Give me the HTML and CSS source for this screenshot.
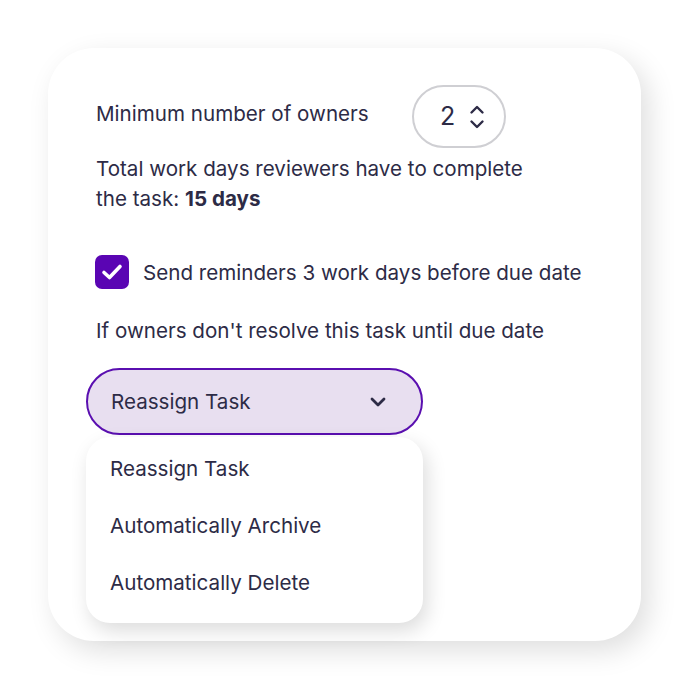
FILE: index.html
```html
<!DOCTYPE html>
<html>
<head>
<meta charset="utf-8">
<link rel="stylesheet" href="styles.css">
</head>
<body>
<div class="card">
  <div class="row-owners">
    <span class="label">Minimum number of owners</span>
    <div class="stepper">
      <span class="num">2</span>
      <svg class="updown" width="16" height="26" viewBox="0 0 16 26" fill="none" stroke="#2d2b46" stroke-width="2.4" stroke-linecap="round" stroke-linejoin="round"><path d="M2.5 8.5 L8 3 L13.5 8.5"/><path d="M2.5 17.5 L8 23 L13.5 17.5"/></svg>
    </div>
  </div>
  <p class="total">Total work days reviewers have to complete<br>the task: <b>15 days</b></p>
  <div class="check-row">
    <span class="checkbox"><svg width="22" height="18" viewBox="0 0 22 18" fill="none" stroke="#fff" stroke-width="3.6" stroke-linecap="round" stroke-linejoin="round"><path d="M3 9.5 L8.5 14.5 L19 3.5"/></svg></span>
    <span class="label">Send reminders 3 work days before due date</span>
  </div>
  <p class="if">If owners don't resolve this task until due date</p>
  <div class="select-wrap">
    <div class="select">
      <span>Reassign Task</span>
      <svg width="18" height="12" viewBox="0 0 18 12" fill="none" stroke="#2d2b46" stroke-width="2.8" stroke-linecap="round" stroke-linejoin="round"><path d="M3 3 L9 9 L15 3"/></svg>
    </div>
    <ul class="menu">
      <li>Reassign Task</li>
      <li>Automatically Archive</li>
      <li>Automatically Delete</li>
    </ul>
  </div>
</div>
</body>
</html>
```

FILE: styles.css
```css
html, body {
  margin: 0;
  padding: 0;
  background: #ffffff;
}
body {
  width: 690px;
  height: 690px;
  font-family: "Inter", "Liberation Sans", sans-serif;
  color: #2d2b46;
  font-size: 20.6px;
  line-height: 23px;
  padding: 48px;
  box-sizing: border-box;
}
.card {
  width: 593px;
  height: 593px;
  box-sizing: border-box;
  background: #fff;
  border-radius: 46px;
  box-shadow: 8px 10px 28px rgba(0, 0, 0, 0.13);
  padding: 37px 0 0 48px;
}
.row-owners {
  display: flex;
  align-items: center;
  height: 63px;
}
.row-owners .label {
  width: 316px;
  margin-top: -6px;
}
.stepper {
  width: 94px;
  height: 63px;
  box-sizing: border-box;
  border: 2px solid #cfcfd3;
  border-radius: 32px;
  display: flex;
  align-items: center;
  padding-left: 26px;
  gap: 14px;
}
.num {
  font-size: 25px;
}
.total {
  margin: 6px 0 0;
  line-height: 30px;
}
.total b {
  font-weight: 700;
}
.check-row {
  display: flex;
  align-items: center;
  margin-top: 41px;
  margin-left: -1px;
  gap: 14px;
}
.checkbox {
  width: 34px;
  height: 34px;
  border-radius: 7px;
  background: #5a05b3;
  display: flex;
  align-items: center;
  justify-content: center;
}
.if {
  margin: 30px 0 0;
}
.select-wrap {
  margin: 26px 0 0 -10px;
  width: 337px;
}
.select {
  height: 67px;
  box-sizing: border-box;
  background: #e8dff0;
  border: 2px solid #5a0fb0;
  border-radius: 34px;
  display: flex;
  align-items: center;
  justify-content: space-between;
  padding: 0 34px 0 23px;
}
.menu {
  list-style: none;
  margin: 2px 0 0;
  padding: 8px 0 7px;
  background: #fff;
  border-radius: 24px;
  box-shadow: 4px 8px 20px rgba(0, 0, 0, 0.14);
}
.menu li {
  height: 57px;
  line-height: 48px;
  padding-left: 24px;
}
```
